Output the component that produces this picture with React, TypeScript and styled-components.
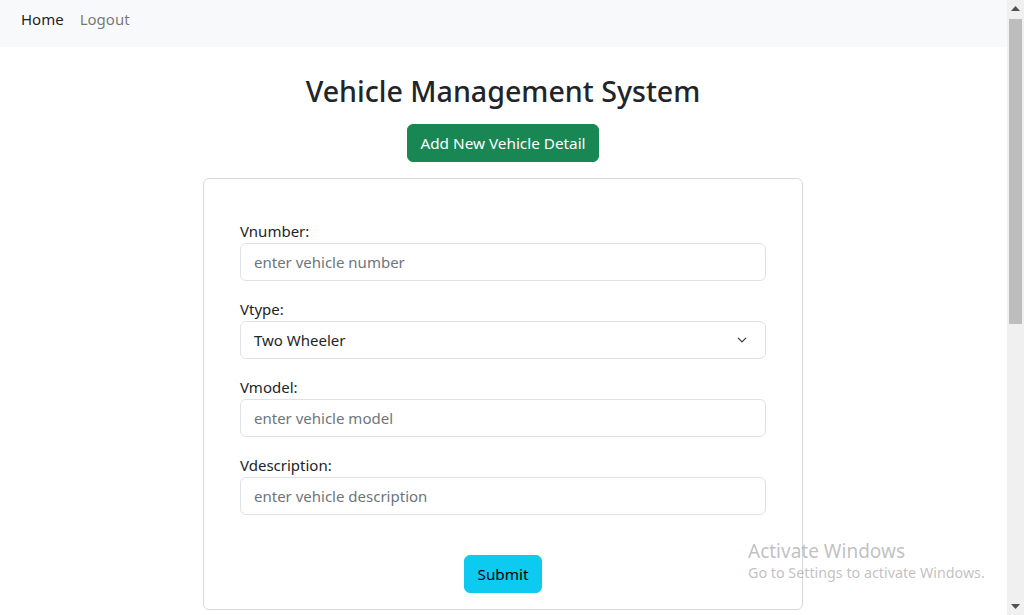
import React from "react";
import styled, { createGlobalStyle } from "styled-components";

const Global = createGlobalStyle`
  html, body { margin: 0; padding: 0; height: 615px; overflow: hidden; background: #fff; }
  #root { height: 615px; }
  * { box-sizing: border-box; }
  body { font-family: "Noto Sans", "Open Sans", sans-serif; color: #212529; font-size: 16px; }
`;

const Shell = styled.div`
  display: flex;
  height: 615px;
  position: relative;
`;

const Main = styled.div`
  flex: 1;
  display: flex;
  flex-direction: column;
  overflow: hidden;
`;

const NavBar = styled.nav`
  height: 47px;
  background: #f8f9fa;
  display: flex;
  align-items: center;
  padding: 0 0 0 21px;
  gap: 16px;
  flex-shrink: 0;
`;

const NavLink = styled.a<{ $active?: boolean }>`
  font-size: 15px;
  text-decoration: none;
  color: ${(p) => (p.$active ? "rgba(0,0,0,0.9)" : "rgba(0,0,0,0.55)")};
  line-height: 24px;
  padding-bottom: 9px;
`;

const Content = styled.div`
  display: flex;
  flex-direction: column;
  align-items: center;
  padding-right: 1px;
`;

const Title = styled.h2`
  margin: 26px 0 0;
  font-size: 28.6px;
  font-weight: 500;
  line-height: 36px;
  color: #212529;
`;

const Button = styled.button<{ $variant: "success" | "info" }>`
  border: 1px solid ${(p) => (p.$variant === "success" ? "#198754" : "#0dcaf0")};
  background: ${(p) => (p.$variant === "success" ? "#198754" : "#0dcaf0")};
  color: ${(p) => (p.$variant === "success" ? "#fff" : "#000")};
  font-family: inherit;
  font-size: 15.3px;
  line-height: 24px;
  height: 38px;
  padding: 0 12px;
  border-radius: 6px;
`;

const AddButton = styled(Button)`
  margin-top: 15px;
`;

const Card = styled.form`
  margin-top: 16px;
  width: 600px;
  border: 1px solid #d6d8da;
  border-radius: 6px;
  padding: 40px 36px 16px 36px;
  display: flex;
  flex-direction: column;
`;

const Field = styled.div`
  display: flex;
  flex-direction: column;
  margin-bottom: 16px;
`;

const Label = styled.label`
  font-size: 15px;
  line-height: 24px;
  color: #212529;
`;

const Input = styled.input`
  height: 38px;
  border: 1px solid #dee2e6;
  border-radius: 6px;
  padding: 0 13px;
  font-family: inherit;
  font-size: 15px;
  color: #212529;
  outline: none;
  &::placeholder { color: #6c757d; }
`;

const SelectBox = styled.div`
  height: 38px;
  border: 1px solid #dee2e6;
  border-radius: 6px;
  padding: 0 16px 0 13px;
  display: flex;
  align-items: center;
  justify-content: space-between;
  font-size: 15px;
  color: #212529;
`;

const SubmitRow = styled.div`
  display: flex;
  justify-content: center;
  margin-top: 24px;
`;

const Scrollbar = styled.div`
  width: 17px;
  background: #f0f0f0;
  display: flex;
  flex-direction: column;
  align-items: center;
  flex-shrink: 0;
`;

const Arrow = styled.div`
  height: 17px;
  width: 17px;
  display: flex;
  align-items: center;
  justify-content: center;
`;

const Thumb = styled.div`
  width: 13px;
  height: 305px;
  margin-top: 2px;
  background: #bdbdbd;
`;

const Spacer = styled.div`
  flex: 1;
`;

const Watermark = styled.div`
  position: absolute;
  left: 748px;
  top: 539px;
  color: rgba(140, 140, 140, 0.55);
  font-family: "Noto Sans", sans-serif;
  pointer-events: none;
`;

const WmTitle = styled.div`
  font-size: 19px;
  line-height: 24px;
`;

const WmSub = styled.div`
  font-size: 14.3px;
  line-height: 20px;
`;

const fields = [
  { label: "Vnumber:", placeholder: "enter vehicle number" },
  { label: "Vtype:", select: "Two Wheeler" },
  { label: "Vmodel:", placeholder: "enter vehicle model" },
  { label: "Vdescription:", placeholder: "enter vehicle description" },
];

export default function App() {
  return (
    <Shell>
      <Global />
      <Main>
        <NavBar>
          <NavLink $active href="#">Home</NavLink>
          <NavLink href="#">Logout</NavLink>
        </NavBar>
        <Content>
          <Title>Vehicle Management System</Title>
          <AddButton $variant="success" type="button">Add New Vehicle Detail</AddButton>
          <Card onSubmit={(e) => e.preventDefault()}>
            {fields.map((f) => (
              <Field key={f.label}>
                <Label>{f.label}</Label>
                {f.select ? (
                  <SelectBox>
                    <span>{f.select}</span>
                    <svg width="14" height="10" viewBox="0 0 16 16">
                      <path d="M2 5l6 6 6-6" fill="none" stroke="#343a40" strokeWidth="2" strokeLinecap="round" strokeLinejoin="round" />
                    </svg>
                  </SelectBox>
                ) : (
                  <Input placeholder={f.placeholder} />
                )}
              </Field>
            ))}
            <SubmitRow>
              <Button $variant="info" type="submit">Submit</Button>
            </SubmitRow>
          </Card>
        </Content>
      </Main>
      <Scrollbar>
        <Arrow>
          <svg width="9" height="5" viewBox="0 0 9 5"><path d="M0 5L4.5 0L9 5Z" fill="#505050" /></svg>
        </Arrow>
        <Thumb />
        <Spacer />
        <Arrow>
          <svg width="9" height="5" viewBox="0 0 9 5"><path d="M0 0L4.5 5L9 0Z" fill="#505050" /></svg>
        </Arrow>
      </Scrollbar>
      <Watermark>
        <WmTitle>Activate Windows</WmTitle>
        <WmSub>Go to Settings to activate Windows.</WmSub>
      </Watermark>
    </Shell>
  );
}
